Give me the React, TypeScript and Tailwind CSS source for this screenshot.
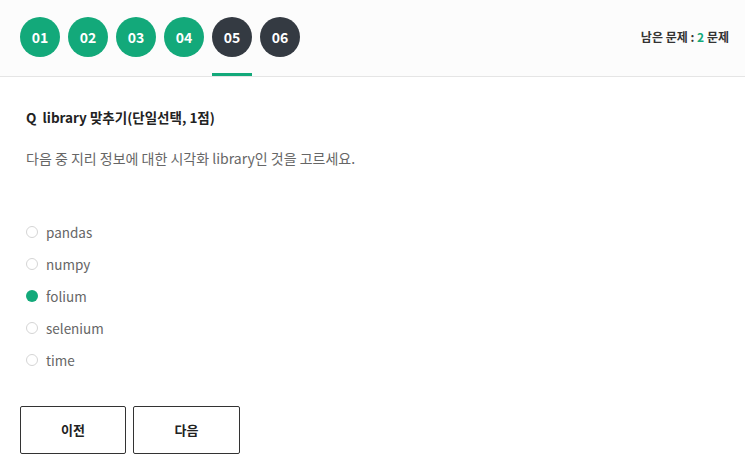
import React from 'react';

const steps = [
  { n: '01', done: true },
  { n: '02', done: true },
  { n: '03', done: true },
  { n: '04', done: true },
  { n: '05', done: false, active: true },
  { n: '06', done: false },
];

const options = ['pandas', 'numpy', 'folium', 'selenium', 'time'];

export default function App() {
  const selected = 'folium';
  return (
    <div className="min-h-screen bg-white font-['Noto_Sans_CJK_KR','Noto_Sans',sans-serif] text-[#222]">
      {/* Top step bar */}
      <header className="h-[77px] bg-[#fcfcfc] border-b border-[#e5e5e5] flex items-start justify-between pl-5 pr-4">
        <div className="flex gap-2 pt-[17px]">
          {steps.map((s) => (
            <div key={s.n} className="flex flex-col items-center">
              <div
                className={
                  'w-10 h-10 rounded-full flex items-center justify-center text-white text-[14px] font-bold ' +
                  (s.done ? 'bg-[#13a97a]' : 'bg-[#343a42]')
                }
              >
                {s.n}
              </div>
              {s.active ? <div className="mt-[16px] h-[3px] w-10 bg-[#13a97a]" /> : null}
            </div>
          ))}
        </div>
        <div className="pt-[28px] text-[12px] font-bold text-[#333]">
          남은 문제 : <span className="text-[#13a97a]">2</span> 문제
        </div>
      </header>

      {/* Question */}
      <main className="pl-[26px] pt-[29px]">
        <h2 className="text-[13.5px] font-bold leading-[22px] text-[#222]">Q&nbsp;&nbsp;library 맞추기(단일선택, 1점)</h2>
        <p className="mt-[19px] text-[14px] leading-[22px] text-[#666]">
          다음 중 지리 정보에 대한 시각화 library인 것을 고르세요.
        </p>

        <ul className="mt-[52px] flex flex-col gap-[10px]">
          {options.map((o) => (
            <li key={o} className="flex items-center h-[22px] text-[13.5px] text-[#666]">
              <span
                className={
                  'w-[12px] h-[12px] rounded-full mr-[8px] ' +
                  (o === selected ? 'bg-[#13a97a]' : 'border border-[#d5d5d5] bg-white')
                }
              />
              {o}
            </li>
          ))}
        </ul>
      </main>

      <div className="flex gap-[7px] pl-5 mt-[35px]">
        <button className="w-[106px] h-[48px] border border-[#333] rounded-[2px] bg-white text-[13px] font-bold text-[#222]">
          이전
        </button>
        <button className="w-[107px] h-[48px] border border-[#333] rounded-[2px] bg-white text-[13px] font-bold text-[#222]">
          다음
        </button>
      </div>
    </div>
  );
}
